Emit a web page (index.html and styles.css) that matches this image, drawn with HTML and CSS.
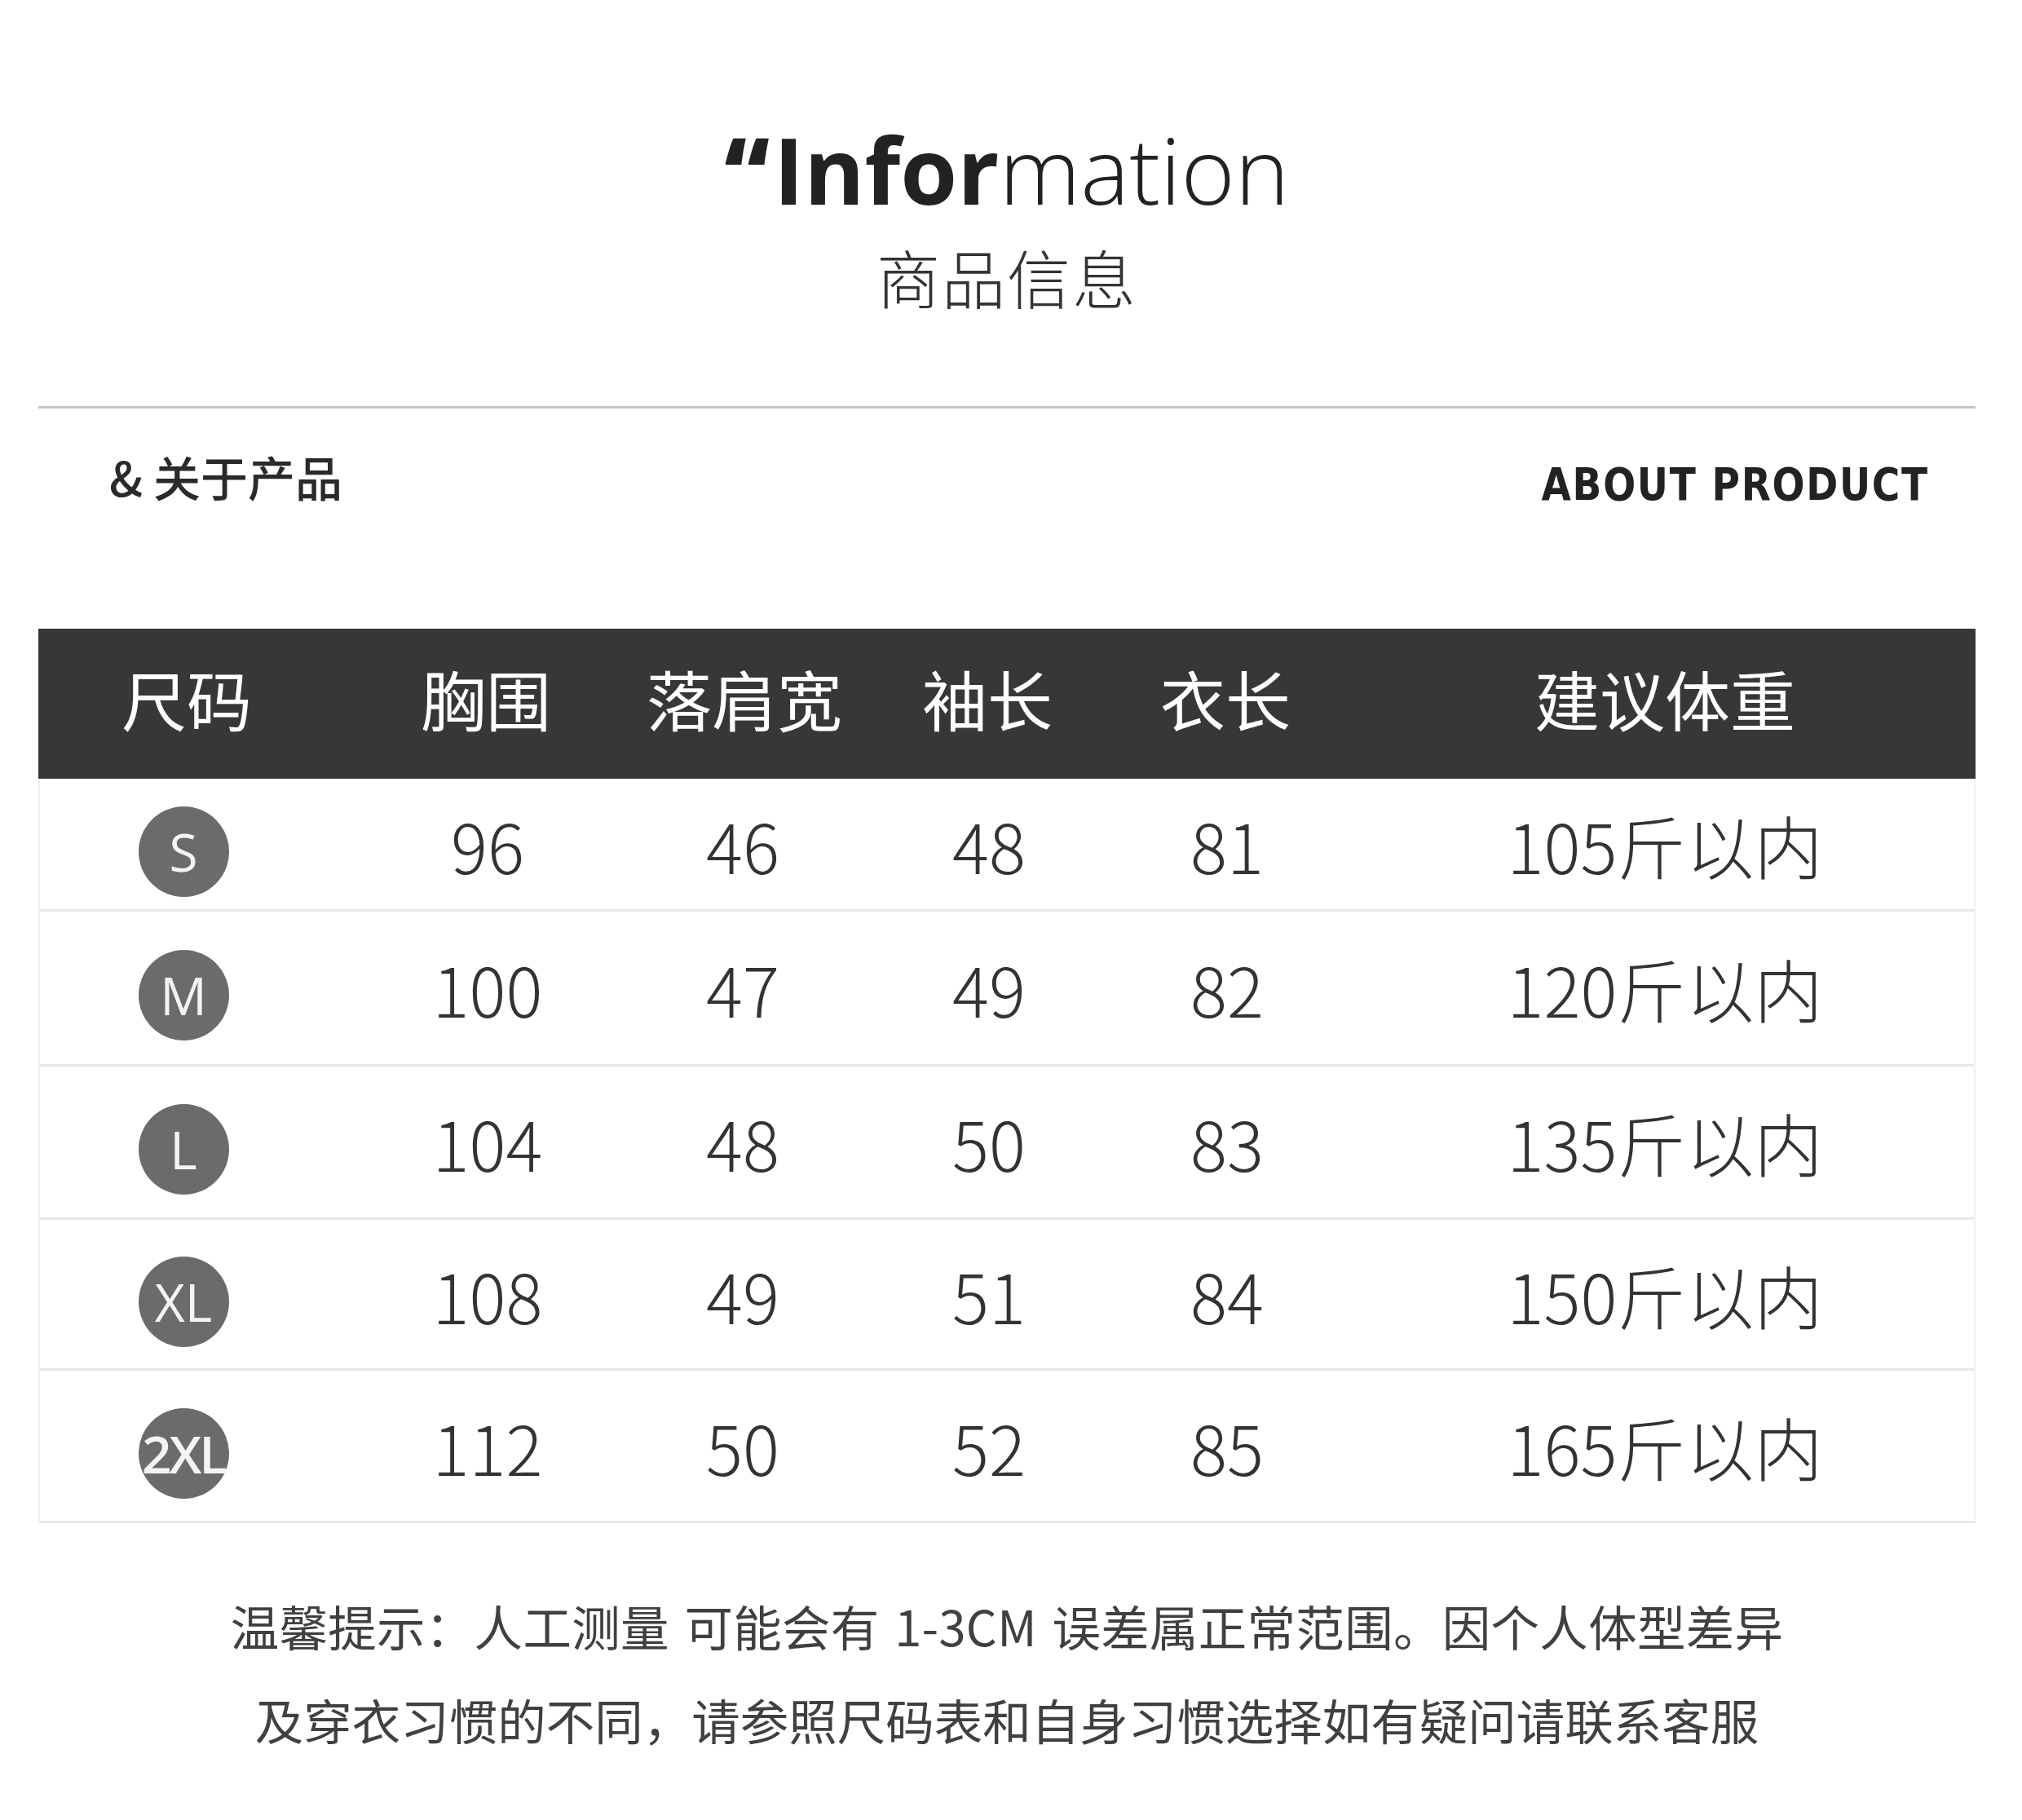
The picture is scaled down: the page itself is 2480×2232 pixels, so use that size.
FILE: index.html
```html
<!DOCTYPE html>
<html lang="zh-CN">
<head>
<meta charset="utf-8">
<title>Information 商品信息</title>
<link rel="stylesheet" href="styles.css">
</head>
<body>
<div class="page">
  <header class="hero">
    <h1 class="title"><span class="quote">&ldquo;</span><span class="bold">Infor</span><span class="thin">mation</span></h1>
    <div class="subtitle">商品信息</div>
  </header>
  <div class="divider"></div>
  <div class="about">
    <div class="about-cn">&amp; 关于产品</div>
    <div class="about-en">ABOUT PRODUCT</div>
  </div>
  <div class="table">
    <div class="row head">
      <div class="cell">尺码</div>
      <div class="cell">胸围</div>
      <div class="cell">落肩宽</div>
      <div class="cell">袖长</div>
      <div class="cell">衣长</div>
      <div class="cell last">建议体重</div>
    </div>
    <div class="row body r1">
      <div class="cell"><span class="size">S</span></div>
      <div class="cell">96</div>
      <div class="cell">46</div>
      <div class="cell">48</div>
      <div class="cell">81</div>
      <div class="cell last">105斤以内</div>
    </div>
    <div class="row body r2">
      <div class="cell"><span class="size">M</span></div>
      <div class="cell">100</div>
      <div class="cell">47</div>
      <div class="cell">49</div>
      <div class="cell">82</div>
      <div class="cell last">120斤以内</div>
    </div>
    <div class="row body r3">
      <div class="cell"><span class="size">L</span></div>
      <div class="cell">104</div>
      <div class="cell">48</div>
      <div class="cell">50</div>
      <div class="cell">83</div>
      <div class="cell last">135斤以内</div>
    </div>
    <div class="row body r4">
      <div class="cell"><span class="size">XL</span></div>
      <div class="cell">108</div>
      <div class="cell">49</div>
      <div class="cell">51</div>
      <div class="cell">84</div>
      <div class="cell last">150斤以内</div>
    </div>
    <div class="row body r5">
      <div class="cell"><span class="size small">2XL</span></div>
      <div class="cell">112</div>
      <div class="cell">50</div>
      <div class="cell">52</div>
      <div class="cell">85</div>
      <div class="cell last">165斤以内</div>
    </div>
  </div>
  <div class="notes">
    <p class="wide">温馨提示：人工测量 可能会有 1-3CM 误差属正常范围。因个人体型差异</p>
    <p>及穿衣习惯的不同，请参照尺码表和自身习惯选择如有疑问请联系客服</p>
  </div>
</div>
</body>
</html>
```

FILE: styles.css
```css
html, body {
  margin: 0;
  padding: 0;
  background: #ffffff;
}
body {
  font-family: "Noto Sans CJK SC", "Noto Sans", sans-serif;
  color: #333333;
}
.page {
  width: 2480px;
  height: 2232px;
  padding: 0 57px 0 47px;
  box-sizing: border-box;
  display: flex;
  flex-direction: column;
}
.hero {
  display: flex;
  flex-direction: column;
  align-items: center;
  padding-top: 144px;
}
.title {
  margin: 0;
  font-family: "Open Sans", "Noto Sans", sans-serif;
  font-size: 113px;
  line-height: 126px;
  font-weight: 400;
  color: #222;
  letter-spacing: 0;
}
.title .quote {
  font-weight: 800;
  margin-right: 4px;
}
.title .bold {
  font-weight: 700;
}
.title .thin {
  font-weight: 300;
  letter-spacing: 0;
}
.subtitle {
  margin-top: 24px;
  font-size: 78px;
  line-height: 90px;
  font-weight: 300;
  color: #333;
  letter-spacing: 2px;
}
.divider {
  margin-top: 114px;
  height: 3px;
  background: #c4c4c4;
}
.about {
  display: flex;
  justify-content: space-between;
  align-items: center;
  padding: 0 57px 0 87px;
  margin-top: 48px;
  height: 70px;
}
.about-cn {
  font-size: 58px;
  font-weight: 500;
  color: #2a2a2a;
}
.about-en {
  font-family: "DejaVu Sans", sans-serif;
  font-size: 56px;
  font-weight: 700;
  color: #222;
  letter-spacing: 2px;
  transform: scaleX(0.84);
  transform-origin: right center;
  margin-top: 18px;
}
.table {
  margin-top: 152px;
  border-left: 2px solid #f0f0f0;
  border-right: 2px solid #f0f0f0;
}
.row {
  display: grid;
  grid-template-columns: 352px 394px 232px 372px 212px 1fr;
  align-items: center;
}
.row.head {
  height: 184px;
  background: #373737;
  color: #ffffff;
  font-size: 80px;
  font-weight: 400;
  margin: 0 -2px;
}
.row.head .cell {
  padding-bottom: 16px;
}
.row.head .cell:first-child {
  padding-left: 12px;
}
.row.body {
  height: 186px;
  border-bottom: 3px solid #e8e8e8;
  font-size: 84px;
  font-weight: 300;
  color: #333;
  box-sizing: border-box;
}
.row.body.r1 { height: 163px; }
.row.body.r2 { height: 190px; }
.row.body.r3 { height: 188px; }
.row.body.r4 { height: 185px; }
.row.body.r5 { height: 187px; }
.cell {
  text-align: center;
  white-space: nowrap;
}
.cell.last {
  padding-left: 52px;
}
.size {
  display: inline-flex;
  align-items: center;
  justify-content: center;
  width: 111px;
  height: 111px;
  border-radius: 50%;
  background: #6b6b6b;
  color: #f4f4f4;
  font-size: 64px;
  font-weight: 400;
  font-family: "Open Sans", "Noto Sans", sans-serif;
  vertical-align: middle;
}
.size.small {
  font-size: 64px;
  font-weight: 600;
  letter-spacing: -3px;
}
.notes {
  margin-top: 68px;
  text-align: center;
  color: #404040;
  font-size: 59.5px;
  font-weight: 400;
}
.notes p {
  margin: 0;
  line-height: 115px;
}
.notes p.wide {
  word-spacing: 5px;
  letter-spacing: 0.3px;
}
```
